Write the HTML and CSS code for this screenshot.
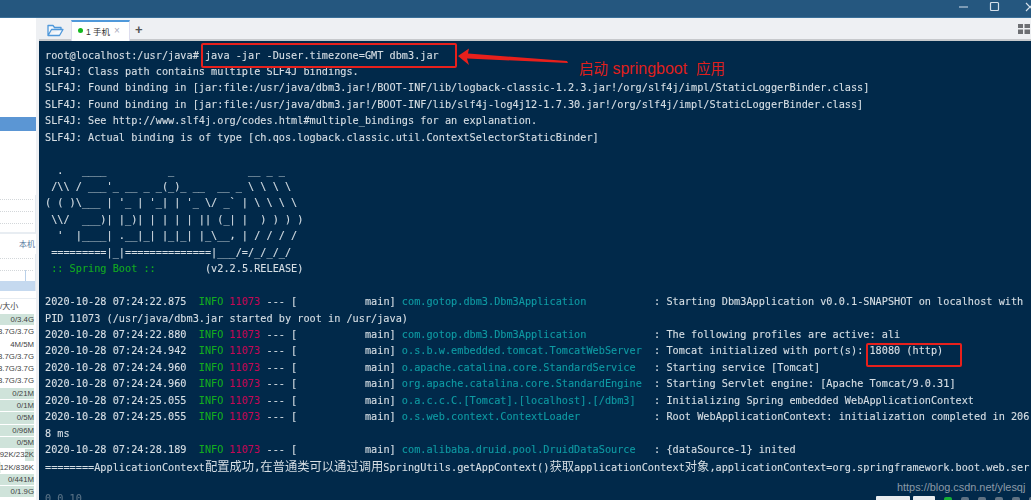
FILE: index.html
```html
<!DOCTYPE html>
<html lang="zh">
<head>
<meta charset="utf-8">
<title>手机 - SSH</title>
<link rel="stylesheet" href="styles.css">
</head>
<body>
<div class="app">
  <header class="titlebar">
    <svg class="winbtn" width="12" height="12" viewBox="0 0 12 12"><path d="M1 6h9" stroke="#b9cadb" stroke-width="1.2"/></svg>
    <svg class="winbtn" width="12" height="12" viewBox="0 0 12 12"><rect x="1.5" y="1.5" width="8" height="8" rx="1" fill="none" stroke="#d5e0ea" stroke-width="1.2"/></svg>
    <svg class="winbtn last" width="6" height="12" viewBox="0 0 6 12"><path d="M1 2l5 5M1 10l5-5" stroke="#d5e0ea" stroke-width="1.2" fill="none"/></svg>
  </header>
  <div class="workspace">
    <aside class="side">
      <div class="side-sel"></div>
      <div class="chart chart-a"><i></i><i></i><i></i></div>
      <div class="side-label">本机</div>
      <div class="chart chart-b"><i></i><i></i><b class="spike"></b><b class="fill"></b></div>
      <div class="table">
        <div class="thead">/大小</div>
        <div class="row full">0/3.4G</div>
        <div class="row">3.7G/3.7G</div>
        <div class="row">4M/5M</div>
        <div class="row">3.7G/3.7G</div>
        <div class="row">3.7G/3.7G</div>
        <div class="row">3.7G/3.7G</div>
        <div class="row full">0/21M</div>
        <div class="row full">0/1M</div>
        <div class="row full">0/5M</div>
        <div class="row full">0/96M</div>
        <div class="row full">0/5M</div>
        <div class="row part">92K/232K</div>
        <div class="row small">12K/836K</div>
        <div class="row full">0/441M</div>
        <div class="row full">0/1.9G</div>
      </div>
    </aside>
    <main class="main">
      <nav class="tabs">
        <svg class="folder" width="17" height="13" viewBox="0 0 17 13"><path d="M1 11.5V1.5h5l1.5 2H14v2M1 11.5h11.5L16 5.5H4.500L1 11.500z" fill="#f4f8fd" stroke="#4f98da" stroke-width="1.3" stroke-linejoin="round"/></svg>
        <div class="tab"><span class="dot"></span><span class="tab-name">1 手机</span><span class="tab-x">×</span></div>
        <span class="plus">+</span>
        <svg class="grid" width="12" height="10" viewBox="0 0 12 10"><path d="M0 0h5v4H0zM6.500 0H12v4H6.500zM0 5.500h5V10H0zM6.500 5.500H12V10H6.500z" fill="#6d6f73"/></svg>
      </nav>
      <section class="term">
        <div class="screen">
          <div class="ln">root@localhost:/usr/java# java -jar -Duser.timezone=GMT dbm3.jar</div>
          <div class="ln">SLF4J: Class path contains multiple SLF4J bindings.</div>
          <div class="ln">SLF4J: Found binding in [jar:file:/usr/java/dbm3.jar!/BOOT-INF/lib/logback-classic-1.2.3.jar!/org/slf4j/impl/StaticLoggerBinder.class]</div>
          <div class="ln">SLF4J: Found binding in [jar:file:/usr/java/dbm3.jar!/BOOT-INF/lib/slf4j-log4j12-1.7.30.jar!/org/slf4j/impl/StaticLoggerBinder.class]</div>
          <div class="ln">SLF4J: See http://www.slf4j.org/codes.html#multiple_bindings for an explanation.</div>
          <div class="ln">SLF4J: Actual binding is of type [ch.qos.logback.classic.util.ContextSelectorStaticBinder]</div>
          <div class="ln"></div>
          <div class="ln">  .   ____          _            __ _ _</div>
          <div class="ln"> /\\ / ___'_ __ _ _(_)_ __  __ _ \ \ \ \</div>
          <div class="ln">( ( )\___ | '_ | '_| | '_ \/ _` | \ \ \ \</div>
          <div class="ln"> \\/  ___)| |_)| | | | | || (_| |  ) ) ) )</div>
          <div class="ln">  '  |____| .__|_| |_|_| |_\__, | / / / /</div>
          <div class="ln"> =========|_|==============|___/=/_/_/_/</div>
          <div class="ln"> <span class="g">:: Spring Boot ::</span>        (v2.2.5.RELEASE)</div>
          <div class="ln"></div>
          <div class="ln">2020-10-28 07:24:22.875  <span class="g">INFO</span> <span class="p">11073</span> --- [           main] <span class="t">com.gotop.dbm3.Dbm3Application          </span> : Starting Dbm3Application v0.0.1-SNAPSHOT on localhost with</div>
          <div class="ln">PID 11073 (/usr/java/dbm3.jar started by root in /usr/java)</div>
          <div class="ln">2020-10-28 07:24:22.880  <span class="g">INFO</span> <span class="p">11073</span> --- [           main] <span class="t">com.gotop.dbm3.Dbm3Application          </span> : The following profiles are active: ali</div>
          <div class="ln">2020-10-28 07:24:24.942  <span class="g">INFO</span> <span class="p">11073</span> --- [           main] <span class="t">o.s.b.w.embedded.tomcat.TomcatWebServer </span> : Tomcat initialized with port(s): 18080 (http)</div>
          <div class="ln">2020-10-28 07:24:24.960  <span class="g">INFO</span> <span class="p">11073</span> --- [           main] <span class="t">o.apache.catalina.core.StandardService  </span> : Starting service [Tomcat]</div>
          <div class="ln">2020-10-28 07:24:24.960  <span class="g">INFO</span> <span class="p">11073</span> --- [           main] <span class="t">org.apache.catalina.core.StandardEngine </span> : Starting Servlet engine: [Apache Tomcat/9.0.31]</div>
          <div class="ln">2020-10-28 07:24:25.055  <span class="g">INFO</span> <span class="p">11073</span> --- [           main] <span class="t">o.a.c.c.C.[Tomcat].[localhost].[/dbm3]  </span> : Initializing Spring embedded WebApplicationContext</div>
          <div class="ln">2020-10-28 07:24:25.055  <span class="g">INFO</span> <span class="p">11073</span> --- [           main] <span class="t">o.s.web.context.ContextLoader           </span> : Root WebApplicationContext: initialization completed in 206</div>
          <div class="ln">8 ms</div>
          <div class="ln">2020-10-28 07:24:28.189  <span class="g">INFO</span> <span class="p">11073</span> --- [           main] <span class="t">com.alibaba.druid.pool.DruidDataSource  </span> : {dataSource-1} inited</div>
          <div class="ln">========ApplicationContext<span class="c">配置成功</span>,<span class="c">在普通类可以通过调用</span>SpringUtils.getAppContext()<span class="c">获取</span>applicationContext<span class="c">对象</span>,applicationContext=org.springframework.boot.web.ser</div>
          <div class="ln"></div>
          <div class="ln faint">0.0.10</div>
        </div>
        <div class="mark mark-cmd"></div>
        <div class="mark mark-port"></div>
        <svg class="arrow" width="112" height="20" viewBox="0 0 112 20"><path d="M0 8L11 0.500 10 5.500 109 13 110 15 9 10.500 11 17z" fill="#e8201c"/></svg>
        <div class="note"><span class="note-c">启动</span> springboot&nbsp; <span class="note-c">应用</span></div>
        <div class="wm">https://blog.csdn.net/ylesqj</div>
        <div class="tray">
          <span class="tray-box wide"></span>
          <span class="tray-box"></span>
          <span class="tray-ic green"></span>
          <span class="tray-ic"></span><span class="tray-ic"></span><span class="tray-ic"></span><span class="tray-ic"></span><span class="tray-ic"></span>
        </div>
      </section>
    </main>
  </div>
</div>
</body>
</html>
```
FILE: styles.css
```css
* { box-sizing: border-box; }
html, body { margin: 0; padding: 0; width: 1031px; height: 500px; overflow: hidden; background: #fff; }
.app { display: flex; flex-direction: column; width: 1031px; height: 500px; }
.titlebar {
  height: 18px; flex: none; background: #25577f; border-bottom: 1px solid #3a6f98;
  display: flex; align-items: center; justify-content: flex-end; gap: 19px; padding-bottom: 3px;
}
.winbtn { display: block; }
.winbtn.last { margin-left: 5px; }
.workspace { flex: 1; display: flex; min-height: 0; }
.side { width: 39px; flex: none; background: #fff; border-right: 3px solid #eef0f3; font: 8px/12.3px "Liberation Sans", "Noto Sans CJK SC", sans-serif; color: #444; padding-top: 99px; overflow: hidden; }
.side-sel { height: 14px; width: 36px; background: #5b96d4; }
.chart { position: relative; width: 36px; background: #fff; border-right: 1px solid #e4eaf0; border-bottom: 2px solid #e8edf2; display: flex; flex-direction: column; gap: 11px; padding: 4px 2px 0 0; overflow: hidden; }
.chart i { display: block; border-top: 1px dotted #d3d7da; }
.chart-a { height: 39px; margin-top: 64px; }
.chart-b { height: 37px; border-bottom: 0; }
.side-label { text-align: right; width: 35px; height: 20px; line-height: 20px; padding-top: 1px; color: #5a7ba0; font-size: 8px; }
.fill { position: absolute; left: 0; right: 0; bottom: 0; height: 10px; background: #c5d9ef; }
.spike { position: absolute; left: 25px; bottom: 10px; width: 1px; height: 11px; background: #b9d0e9; }
.table { width: 36px; margin-top: 7px; border-top: 1px solid #e8edf2; }
.thead { height: 15px; line-height: 16px; font-size: 8px; color: #444; white-space: nowrap; }
.row { height: 12.3px; width: 34px; text-align: right; white-space: nowrap; color: #444; background: #fff; font-size: 7.8px; display: flex; justify-content: flex-end; border-bottom: 1px solid #fff; }
.row.full { background: #cfe3da; }
.row.part { background: linear-gradient(to right, #fff 75%, #cfe3da 75%); }
.row.small { background: linear-gradient(to right, #e6f1ec 4%, #fff 4%); }
.main { flex: 1; min-width: 0; display: flex; flex-direction: column; }
.tabs { height: 23px; flex: none; background: #eef0f3; border-bottom: 2px solid #c7c9cc; display: flex; align-items: flex-start; padding-left: 8px; position: relative; }
.folder { margin-top: 6px; flex: none; }
.tab { width: 59px; height: 21px; margin: 2px 0 0 7px; background: #fff; border-top: 2px solid #4f98da; border-left: 1px solid #dde; border-right: 1px solid #dde; display: flex; align-items: center; font: 8.500px "Liberation Sans", "Noto Sans CJK SC", sans-serif; color: #333; padding: 0 0 2px 6px; }
.dot { width: 5px; height: 5px; border-radius: 50%; background: #14b81e; margin-right: 3px; }
.tab-name { white-space: nowrap; width: 28px; }
.tab-x { color: #aab; font-size: 10px; }
.plus { font: bold 13px/20px "Liberation Sans", sans-serif; color: #555; margin: 2px 0 0 5px; }
.grid { position: absolute; right: 1px; top: 6px; }
.term { flex: 1; position: relative; background: #01294a; overflow: hidden; min-height: 0; }
.screen { padding: 6.5px 0 0 6px; font: 10.22px/16.44px "DejaVu Sans Mono", "Noto Sans CJK SC", monospace; color: #d6dee4; filter: blur(0.25px); -webkit-text-stroke: 0.12px currentColor; }
.ln { height: 16.44px; white-space: pre; }
.g { color: #13ab22; }
.p { color: #c40a55; }
.t { color: #0f9aa3; }
.c { font: 12.3px/16.44px "Noto Sans CJK SC", sans-serif; -webkit-text-stroke: 0; }
.faint { color: #7d8f9e; opacity: .7; }
.mark { position: absolute; border: 2px solid #e8201c; border-radius: 2px; }
.mark-cmd { left: 162px; top: 2px; width: 256px; height: 25px; }
.mark-port { left: 827px; top: 302px; width: 96px; height: 24px; }
.arrow { position: absolute; left: 419px; top: 7px; }
.note { position: absolute; left: 540px; top: 18px; font: 16px/20px "Liberation Sans", "Noto Sans CJK SC", sans-serif; color: #df1f1c; white-space: nowrap; }
.note-c { font-size: 14.5px; }
.wm { position: absolute; left: 858px; top: 439px; font: 10.9px/14px "Liberation Sans", sans-serif; color: #8b9aa7; white-space: nowrap; }
.tray { position: absolute; left: 837px; top: 455px; display: flex; gap: 3px; align-items: flex-start; }
.tray-box { width: 22px; height: 6px; background: #e9ecef; border-radius: 1px 1px 0 0; }
.tray-box.wide { width: 34px; }
.tray-ic { width: 8px; height: 5px; margin-left: 6px; margin-top: 1px; background: #5f7283; border-radius: 2px 2px 0 0; }
.tray-ic.green { background: #16b035; }
```
